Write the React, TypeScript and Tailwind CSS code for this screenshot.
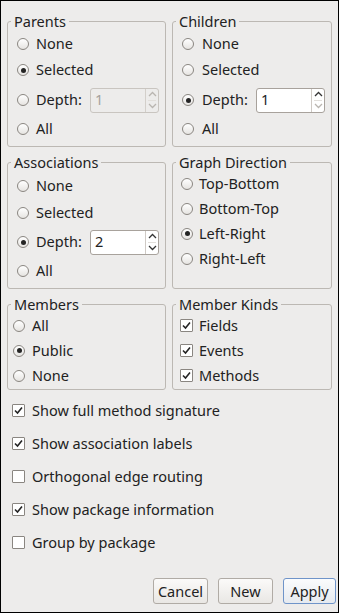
import type { ReactNode } from 'react';

function Radio({ checked }: { checked?: boolean }) {
  return (
    <span className="flex h-[12px] w-[12px] shrink-0 items-center justify-center rounded-full border border-[#8a8681] bg-gradient-to-b from-white to-[#e6e4e1]">
      {checked ? <span className="h-[5px] w-[5px] rounded-full bg-[#242424]" /> : null}
    </span>
  );
}

function Check({ checked }: { checked?: boolean }) {
  return (
    <span className="flex h-[13px] w-[13px] shrink-0 items-center justify-center rounded-[1px] border border-[#8a8681] bg-white">
      {checked ? (
        <svg width="11" height="11" viewBox="0 0 11 11">
          <path d="M2 5.5 L4.5 8 L9 2.5" fill="none" stroke="#242424" strokeWidth="1.6" />
        </svg>
      ) : null}
    </span>
  );
}

function Arrow({ up, dim }: { up?: boolean; dim?: boolean }) {
  return (
    <svg width="9" height="6" viewBox="0 0 9 6">
      <path
        d={up ? 'M1 5 L4.5 1.5 L8 5' : 'M1 1 L4.5 4.5 L8 1'}
        fill="none"
        stroke={dim ? '#b9b5b0' : '#333333'}
        strokeWidth="1.3"
      />
    </svg>
  );
}

function SpinBox({ value, disabled, downDim }: { value: string; disabled?: boolean; downDim?: boolean }) {
  return (
    <div
      className={
        disabled
          ? 'ml-auto mr-[6px] flex h-[25px] w-[69px] rounded-[3px] border border-[#c9c5c0] bg-[#edeceb]'
          : 'ml-auto mr-[6px] flex h-[25px] w-[69px] rounded-[3px] border border-[#a8a29c] bg-white'
      }
    >
      <span className={disabled ? 'flex flex-1 items-center pl-[4px] text-[#a5a19c]' : 'flex flex-1 items-center pl-[4px]'}>
        {value}
      </span>
      <div className={disabled ? 'flex w-[13px] flex-col border-l border-[#d3cfca]' : 'flex w-[13px] flex-col border-l border-[#cfcac5]'}>
        <div className="flex flex-1 items-center justify-center">
          <Arrow up dim={disabled} />
        </div>
        <div className="mx-[2px] border-t border-[#e2dfdb]" />
        <div className="flex flex-1 items-center justify-center">
          <Arrow dim={disabled || downDim} />
        </div>
      </div>
    </div>
  );
}

function Group({ title, className, children }: { title: string; className?: string; children: ReactNode }) {
  return (
    <fieldset className={'m-0 min-w-0 rounded-[3px] border border-[#bcb8b3] p-0 ' + (className ?? '')}>
      <legend className="ml-[3px] px-[3px] leading-[16px]">{title}</legend>
      {children}
    </fieldset>
  );
}

function Row({ h, pl, gap, children }: { h: string; pl: string; gap: string; children: ReactNode }) {
  return <div className={'flex items-center ' + h + ' ' + pl + ' ' + gap}>{children}</div>;
}

export default function App() {
  return (
    <div className="flex h-[613px] w-[339px] flex-col border border-black bg-[#edeceb] font-['Noto_Sans',sans-serif] text-[14.5px] text-[#222222]">
      <div className="grid grid-cols-[159px_160px] gap-x-[6px] gap-y-[7px] px-[6px] pt-[12px]">
        <Group title="Parents" className="h-[134px]">
          <div className="pt-[2px]">
            <Row h="h-[26px]" pl="pl-[9px]" gap="gap-[7px]"><Radio />None</Row>
            <Row h="h-[26px]" pl="pl-[9px]" gap="gap-[7px]"><Radio checked />Selected</Row>
            <Row h="h-[34px]" pl="pl-[9px]" gap="gap-[7px]"><Radio />Depth:<SpinBox value="1" disabled /></Row>
            <Row h="h-[24px]" pl="pl-[9px]" gap="gap-[7px]"><Radio />All</Row>
          </div>
        </Group>
        <Group title="Children" className="h-[134px]">
          <div className="pt-[2px]">
            <Row h="h-[26px]" pl="pl-[9px]" gap="gap-[8px]"><Radio />None</Row>
            <Row h="h-[26px]" pl="pl-[9px]" gap="gap-[8px]"><Radio />Selected</Row>
            <Row h="h-[34px]" pl="pl-[9px]" gap="gap-[8px]"><Radio checked />Depth:<SpinBox value="1" downDim /></Row>
            <Row h="h-[24px]" pl="pl-[9px]" gap="gap-[8px]"><Radio />All</Row>
          </div>
        </Group>

        <Group title="Associations" className="h-[135px]">
          <div className="pt-[2px]">
            <Row h="h-[28px]" pl="pl-[9px]" gap="gap-[7px]"><Radio />None</Row>
            <Row h="h-[26px]" pl="pl-[9px]" gap="gap-[7px]"><Radio />Selected</Row>
            <Row h="h-[32px]" pl="pl-[9px]" gap="gap-[7px]"><Radio checked />Depth:<SpinBox value="2" /></Row>
            <Row h="h-[26px]" pl="pl-[9px]" gap="gap-[7px]"><Radio />All</Row>
          </div>
        </Group>
        <Group title="Graph Direction" className="h-[135px]">
          <div className="pt-[2px]">
            <Row h="h-[24px]" pl="pl-[8px]" gap="gap-[6px]"><Radio />Top-Bottom</Row>
            <Row h="h-[25px]" pl="pl-[8px]" gap="gap-[6px]"><Radio />Bottom-Top</Row>
            <Row h="h-[25px]" pl="pl-[8px]" gap="gap-[6px]"><Radio checked />Left-Right</Row>
            <Row h="h-[25px]" pl="pl-[8px]" gap="gap-[6px]"><Radio />Right-Left</Row>
          </div>
        </Group>

        <Group title="Members" className="h-[94px]">
          <div className="pt-[1px]">
            <Row h="h-[25px]" pl="pl-[5px]" gap="gap-[7px]"><Radio />All</Row>
            <Row h="h-[25px]" pl="pl-[5px]" gap="gap-[7px]"><Radio checked />Public</Row>
            <Row h="h-[25px]" pl="pl-[5px]" gap="gap-[7px]"><Radio />None</Row>
          </div>
        </Group>
        <Group title="Member Kinds" className="h-[94px]">
          <div className="pt-[1px]">
            <Row h="h-[25px]" pl="pl-[7px]" gap="gap-[6px]"><Check checked />Fields</Row>
            <Row h="h-[25px]" pl="pl-[7px]" gap="gap-[6px]"><Check checked />Events</Row>
            <Row h="h-[25px]" pl="pl-[7px]" gap="gap-[6px]"><Check checked />Methods</Row>
          </div>
        </Group>
      </div>

      <div className="mt-[4px] flex flex-col">
        <Row h="h-[33px]" pl="pl-[11px]" gap="gap-[7px]"><Check checked />Show full method signature</Row>
        <Row h="h-[33px]" pl="pl-[11px]" gap="gap-[7px]"><Check checked />Show association labels</Row>
        <Row h="h-[33px]" pl="pl-[11px]" gap="gap-[7px]"><Check />Orthogonal edge routing</Row>
        <Row h="h-[33px]" pl="pl-[11px]" gap="gap-[7px]"><Check checked />Show package information</Row>
        <Row h="h-[33px]" pl="pl-[11px]" gap="gap-[7px]"><Check />Group by package</Row>
      </div>

      <div className="mt-auto flex justify-end gap-[10px] pb-[8px] pr-[2px]">
        <button className="ml-[1px] h-[26px] w-[55px] rounded-[3px] border border-[#b0aba5] bg-gradient-to-b from-[#fbfaf9] to-[#e9e7e4] leading-none">
          Cancel
        </button>
        <button className="h-[26px] w-[55px] rounded-[3px] border border-[#b0aba5] bg-gradient-to-b from-[#fbfaf9] to-[#e9e7e4] leading-none">
          New
        </button>
        <button className="h-[26px] w-[53px] rounded-[3px] border border-[#6f94c9] bg-gradient-to-b from-[#fbfcfd] to-[#e6eaef] leading-none">
          Apply
        </button>
      </div>
    </div>
  );
}
